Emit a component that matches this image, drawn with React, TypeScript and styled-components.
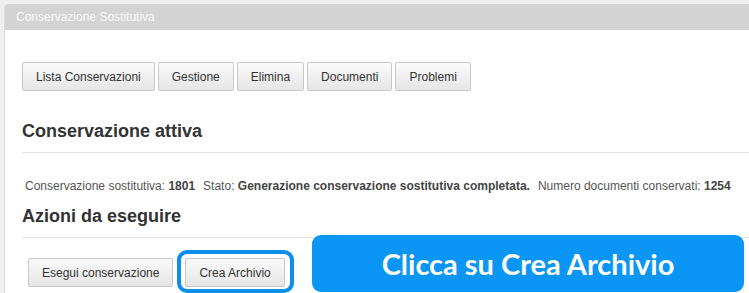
import React from 'react'
import styled, { createGlobalStyle } from 'styled-components'

const GlobalStyle = createGlobalStyle`
    html, body {
        margin: 0;
        padding: 0;
        background: #efefef;
        overflow: hidden;
    }
    body {
        font-family: "Liberation Sans", Arial, sans-serif;
        color: #333;
    }
`

const topButtons = ['Lista Conservazioni', 'Gestione', 'Elimina', 'Documenti', 'Problemi']

export default function App() {
    return (
        <>
            <GlobalStyle />
            <Panel>
                <Header>Conservazione Sostitutiva</Header>
                <Body>
                    <Toolbar>
                        {topButtons.map(label => (
                            <Button key={label}>{label}</Button>
                        ))}
                    </Toolbar>

                    <Title>Conservazione attiva</Title>
                    <Divider />
                    <Info>
                        <Item>Conservazione sostitutiva: <b>1801</b></Item>
                        <Item>Stato: <b>Generazione conservazione sostitutiva completata.</b></Item>
                        <Item>Numero documenti conservati: <b>1254</b></Item>
                    </Info>

                    <Title $tight>Azioni da eseguire</Title>
                    <Divider />
                    <Actions>
                        <Button>Esegui conservazione</Button>
                        <Highlight>
                            <Button>Crea Archivio</Button>
                        </Highlight>
                    </Actions>

                    <Callout>Clicca su Crea Archivio</Callout>
                </Body>
            </Panel>
        </>
    )
}

const Panel = styled.div`
    position: relative;
    margin: 4px 0 0 4px;
    height: 289px;
    background: #fff;
    border-left: 1px solid #dcdcdc;
    border-top-left-radius: 4px;
`
const Header = styled.div`
    height: 26px;
    line-height: 26px;
    padding-left: 11px;
    background: #d3d3d3;
    color: #fafafa;
    font-size: 12px;
    border-top-left-radius: 4px;
`
const Body = styled.div`
    padding: 32px 0 0 17px;
`
const Toolbar = styled.div`
    display: flex;
    gap: 3px;
`
const Button = styled.button`
    height: 29px;
    padding: 0 13px;
    font-family: "Liberation Sans", Arial, sans-serif;
    font-size: 12px;
    color: #333;
    background: linear-gradient(#fafafa, #e6e6e6);
    border: 1px solid #c8c8c8;
    border-radius: 2px;
`
const Title = styled.h3<{ $tight?: boolean }>`
    margin: ${p => (p.$tight ? '12px' : '30px')} 0 0;
    font-size: 18px;
    line-height: 20px;
    font-weight: bold;
    color: #333;
`
const Divider = styled.hr`
    margin: 11px 0 0;
    border: 0;
    border-top: 1px solid #e3e3e3;
`
const Info = styled.div`
    display: flex;
    gap: 8px;
    margin-top: 25px;
    padding-left: 3px;
    font-size: 12px;
    line-height: 16px;
    color: #555;
    white-space: nowrap;
    b {
        color: #444;
    }
`
const Item = styled.span``
const Actions = styled.div`
    display: flex;
    gap: 12px;
    margin-top: 20px;
    padding-left: 6px;
`
const Highlight = styled.span`
    position: relative;
    display: inline-flex;
    &::after {
        content: '';
        position: absolute;
        inset: -8px -9px -6px -8px;
        border: 4px solid #0b8fea;
        border-radius: 10px;
        pointer-events: none;
    }
`
const Callout = styled.div`
    position: absolute;
    left: 307px;
    top: 231px;
    width: 432px;
    height: 57px;
    display: flex;
    align-items: center;
    justify-content: center;
    background: #0b96f6;
    border-radius: 9px;
    color: #fff;
    font-family: Lato, "Open Sans", sans-serif;
    font-weight: bold;
    font-size: 29px;
`
